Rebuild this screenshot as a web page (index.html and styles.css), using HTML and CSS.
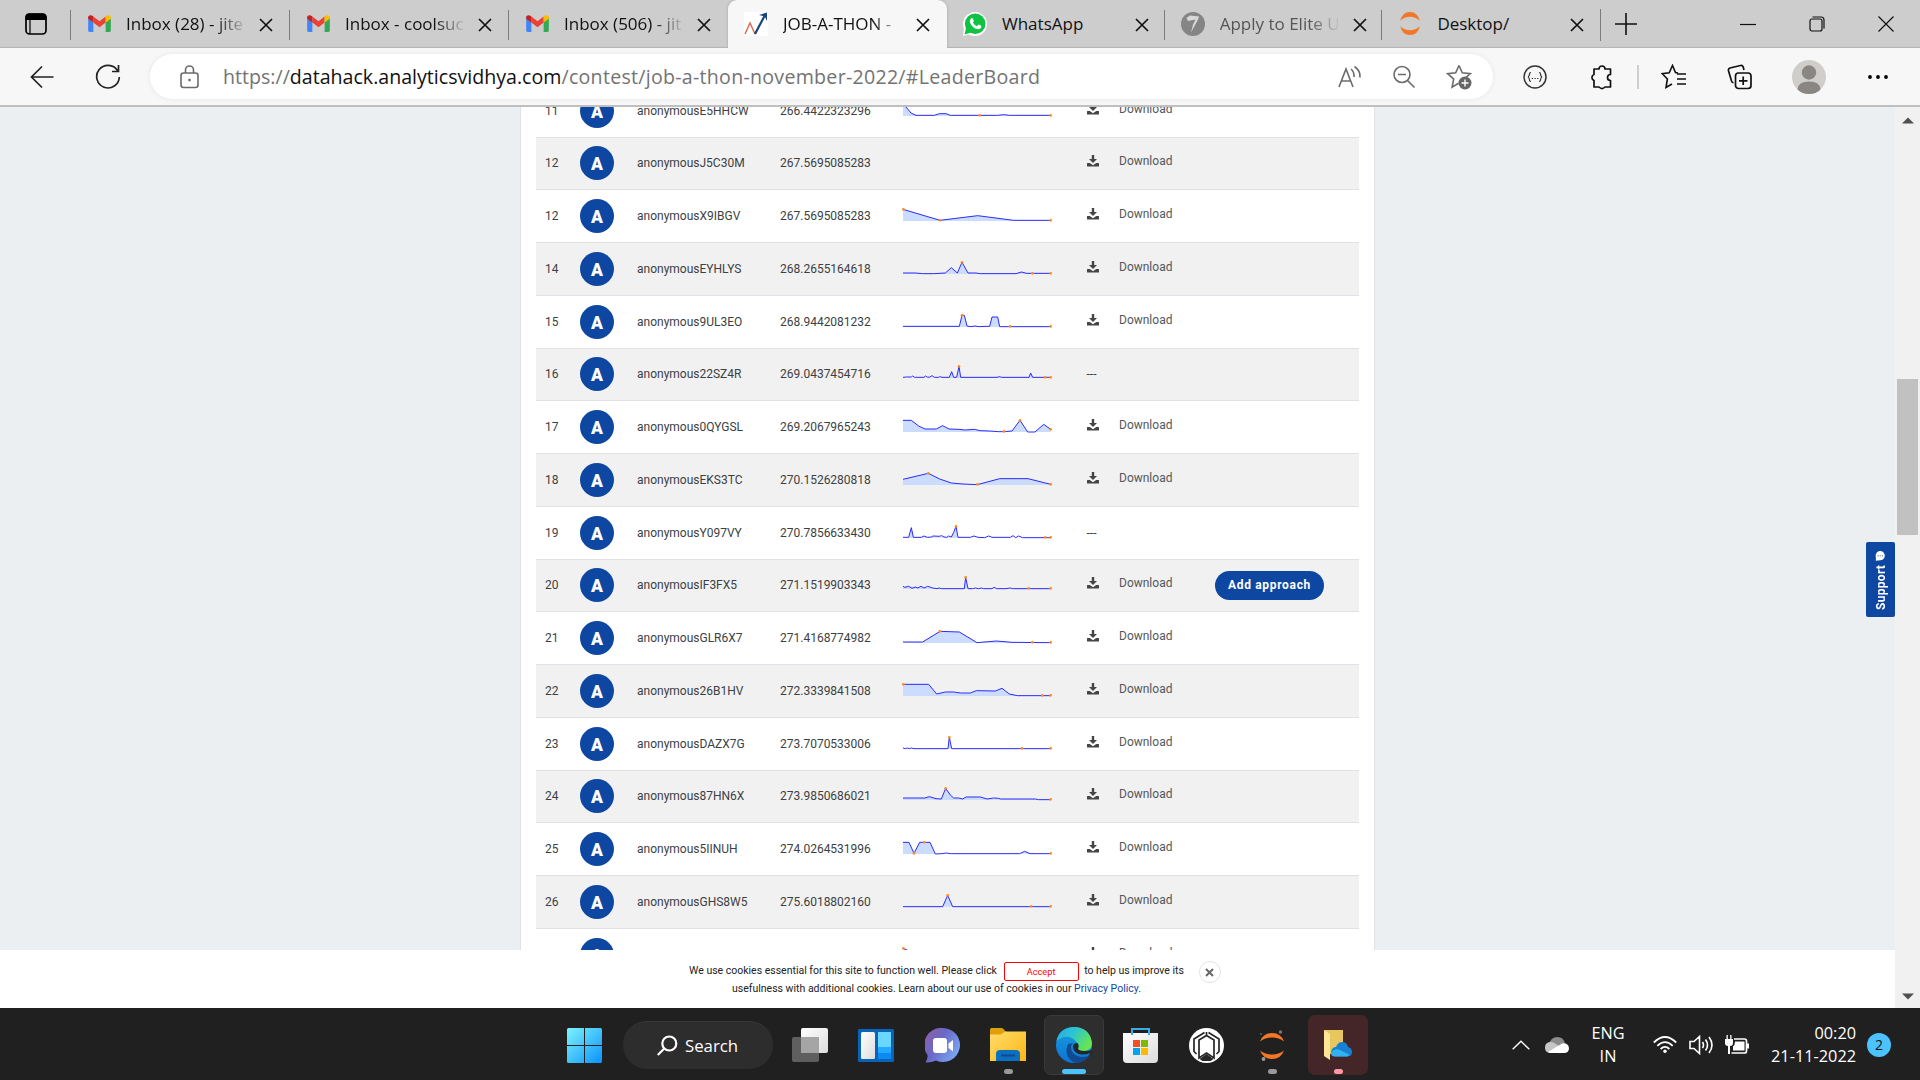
FILE: index.html
```html
<!DOCTYPE html>
<html lang="en">
<head>
<meta charset="utf-8">
<title>JOB-A-THON - November 2022</title>
<link rel="stylesheet" href="styles.css">
</head>
<body>
<svg class="defs" width="0" height="0" aria-hidden="true">
  <defs>
    <linearGradient id="gWin" x1="0" y1="0" x2="1" y2="1"><stop offset="0" stop-color="#7df3fd"/><stop offset="1" stop-color="#0a93fb"/></linearGradient>
    <linearGradient id="gWhite" x1="0" y1="0" x2="1" y2="1"><stop offset="0" stop-color="#fff"/><stop offset="1" stop-color="#dcdcdc"/></linearGradient>
    <linearGradient id="gChat" x1="0" y1="0" x2="1" y2="0.6"><stop offset="0" stop-color="#8d5f9f"/><stop offset=".5" stop-color="#6a68c8"/><stop offset="1" stop-color="#7aa5f3"/></linearGradient>
    <linearGradient id="gFolder" x1="0" y1="0" x2="1" y2="1"><stop offset="0" stop-color="#ffdc6c"/><stop offset="1" stop-color="#fcb813"/></linearGradient>
    <linearGradient id="gEdgeTop" x1="0" y1="0" x2="1" y2=".5"><stop offset="0" stop-color="#2ba6ec"/><stop offset=".5" stop-color="#2cc6cf"/><stop offset="1" stop-color="#67e551"/></linearGradient>
    <linearGradient id="gEdgeLeft" x1="0" y1="0" x2="0" y2="1"><stop offset="0" stop-color="#1b9de2"/><stop offset="1" stop-color="#0a74d4"/></linearGradient>
    <symbol id="gmail" viewBox="0 0 24 18"><path fill="#4285f4" d="M0 2v14.500q0 1.500 1.500 1.500H5.500V8z"/><path fill="#34a853" d="M24 2v14.500q0 1.500-1.500 1.500H18.500V8z"/><path fill="#ea4335" d="M5.500 1.500 12 6.500l6.500-5V8L12 13 5.500 8z"/><path fill="#c5221f" d="M0 2.500C0 0 3 -.8 5.500 1.500V8L0 4z"/><path fill="#fbbc04" d="M24 2.500C24 0 21-.8 18.500 1.500V8L24 4z"/></symbol>
    <symbol id="close" viewBox="0 0 14 14"><path d="M1 1 13 13M13 1 1 13" stroke="#111" stroke-width="1.700" fill="none"/></symbol>
    <symbol id="dl" viewBox="0 0 12 12"><path fill="#454545" d="M4.800 0h2.400v4H10L6 8 2 4h2.800zM.5 8h2.300L6 10.200 9.200 8h2.300q.5 0 .5.500v2.500q0 .500-.5.500H.5Q0 11.500 0 11V8.500Q0 8 .5 8z"/></symbol>
    <symbol id="jup" viewBox="0 0 24 28"><path fill="#f37726" d="M1 11Q3.500 1 12 1t11 10Q18 6.500 12 6.500T1 11zM1 17Q3.500 27 12 27t11-10Q18 21.500 12 21.500T1 17z"/></symbol>
  </defs>
</svg>

<header class="tabstrip">
  <div class="tab-actions"><svg width="22" height="22" viewBox="0 0 22 22"><rect x="1" y="1" width="20" height="20" rx="3.500" fill="none" stroke="#000" stroke-width="1.700"/><path d="M1 6.500V4q0-3 3-3h14q3 0 3 3v2.500zM5 7v14" stroke="#000" stroke-width="1.200"/></svg></div>
  <div class="tab"><span class="fav"><svg width="23" height="17"><use href="#gmail"/></svg></span><span class="title fade">Inbox (28) - jite</span><svg class="x" width="14" height="14"><use href="#close"/></svg></div>
  <div class="tab"><span class="fav"><svg width="23" height="17"><use href="#gmail"/></svg></span><span class="title fade">Inbox - coolsuc</span><svg class="x" width="14" height="14"><use href="#close"/></svg></div>
  <div class="tab"><span class="fav"><svg width="23" height="17"><use href="#gmail"/></svg></span><span class="title fade">Inbox (506) - jit</span><svg class="x" width="14" height="14"><use href="#close"/></svg></div>
  <div class="tab active"><span class="fav"><svg width="24" height="24" viewBox="0 0 24 24"><path fill="#fff" d="M0 0h24v24H0z"/><path d="M1 22 6 11l5 11" fill="none" stroke="#d9694c" stroke-width="1.400"/><path d="M11 22 20.500 4" fill="none" stroke="#16467c" stroke-width="2.200"/><path fill="#16467c" d="M15 3 23 .5V9l-2.200-4.500z"/></svg></span><span class="title fade">JOB-A-THON -</span><svg class="x" width="14" height="14"><use href="#close"/></svg></div>
  <div class="tab"><span class="fav"><svg width="24" height="24" viewBox="0 0 24 24"><circle cx="12" cy="12" r="12" fill="#fff"/><path fill="#fff" d="M0 24 1 16l7 6z"/><circle cx="12.200" cy="11.700" r="10.300" fill="#10c243"/><path fill="#10c243" d="m1.500 22.500 1.700-7 5 5z"/><path fill="#fff" d="M8 6.500q1-1 2 .2l.8 2q.2.700-.9 1.800 1.600 2.900 4 3.700l1.400-1.500q.4-.4 2.500.9 1 .5.400 1.800-1 2-3.400 1.800-5.500-1-8-7Q6.500 8 8 6.500z"/></svg></span><span class="title">WhatsApp</span><svg class="x" width="14" height="14"><use href="#close"/></svg></div>
  <div class="tab dim"><span class="fav"><svg width="24" height="24" viewBox="0 0 24 24"><circle cx="12" cy="12" r="12" fill="#858585"/><path fill="#d8d8d8" d="M5.500 6 9 3.500l9 1-1 3L10 20.500l2-8 2.500-5L7 9z"/></svg></span><span class="title fade">Apply to Elite U</span><svg class="x" width="14" height="14"><use href="#close"/></svg></div>
  <div class="tab"><span class="fav"><svg width="24" height="25"><use href="#jup"/></svg></span><span class="title">Desktop/</span><svg class="x" width="14" height="14"><use href="#close"/></svg></div>
  <div class="newtab"><svg width="22" height="22" viewBox="0 0 22 22"><path d="M11 0v22M0 11h22" stroke="#111" stroke-width="1.600"/></svg></div>
  <div class="wincontrols">
    <svg width="16" height="16" viewBox="0 0 16 16"><path d="M0 8.500h16" stroke="#111" stroke-width="1.200"/></svg>
    <svg width="16" height="16" viewBox="0 0 16 16" fill="none" stroke="#111" stroke-width="1.200"><rect x="1" y="3" width="12" height="12" rx="2"/><path d="M3.500 1H12q3 0 3 3v8.500"/></svg>
    <svg width="16" height="16" viewBox="0 0 16 16"><path d="m.5.500 15 15m0-15-15 15" stroke="#111" stroke-width="1.200"/></svg>
  </div>
</header>

<nav class="toolbar">
  <div class="navbtns">
    <svg width="24" height="24" viewBox="0 0 24 24" fill="none" stroke="#222" stroke-width="1.700"><path d="M23.500 12H1.500M12 1.500 1.500 12 12 22.500"/></svg>
    <svg width="26" height="26" viewBox="0 0 26 26" fill="none" stroke="#222" stroke-width="1.700"><path d="M22.500 6.500A11.300 11.300 0 1 0 24.300 13M23.500 1v6.500H17"/></svg>
  </div>
  <div class="address">
    <svg width="20" height="24" viewBox="0 0 20 24" fill="none" stroke="#6b6b6b" stroke-width="1.600"><rect x="1" y="8" width="17" height="14.500" rx="2.500"/><path d="M5.500 8V5a4 4 0 0 1 8 0v3"/><circle cx="9.500" cy="15" r="1" fill="#6b6b6b" stroke-width=".8"/></svg>
    <div class="url"><span>https://</span><b>datahack.analyticsvidhya.com</b><span class="path">/contest/job-a-thon-november-2022/#LeaderBoard</span></div>
    <div class="addr-icons">
      <svg width="24" height="24" viewBox="0 0 24 24" fill="none" stroke="#6b6b6b" stroke-width="1.600"><path d="M1 22 8 4l7 18M3.500 16h9M13 4q3.500 3 3 8M16.500 1.500q6 4 5.500 11"/></svg>
      <svg width="24" height="24" viewBox="0 0 24 24" fill="none" stroke="#6b6b6b" stroke-width="1.600"><circle cx="10" cy="9.500" r="8"/><path d="m15.500 15.500 7 7M6 9.500h8"/></svg>
      <svg width="26" height="26" viewBox="0 0 26 26"><path d="m13 1.500 3.300 7.300 8 .9-5 4.300M13 1.500 9.700 8.800l-8 .9 6 5.400-1.600 8 6.500-3.800" fill="none" stroke="#6b6b6b" stroke-width="1.600"/><circle cx="19" cy="19" r="6.500" fill="#666"/><path d="M19 15.500v7M15.500 19h7" stroke="#fff" stroke-width="1.400"/></svg>
    </div>
  </div>
  <div class="ext">
    <svg width="24" height="24" viewBox="0 0 24 24" fill="none" stroke="#333" stroke-width="1.500"><circle cx="12" cy="12" r="11"/><path d="M8 7.500Q6.500 7.500 6.500 9T5.300 12q1.200 1.500 1.200 3T8 16.500M16 7.500q1.500 0 1.500 1.500t1.200 3q-1.200 1.500-1.200 3T16 16.500M8.700 13.500h1.300m1.400 0h1.300m1.400 0h1.300" stroke-width="1.200"/></svg>
    <svg width="24" height="26" viewBox="0 0 24 26" fill="none" stroke="#111" stroke-width="1.700" stroke-linejoin="round"><path d="M5 5H10A3 3 0 0 1 16 5H21.500v5.500q-3 0-3 3t3 3V23H16q-3 3-6 0H5v-6.500A3.200 3.200 0 0 1 5 10.500z"/></svg>
    <i class="vsep"></i>
    <svg width="26" height="26" viewBox="0 0 26 26" fill="none" stroke="#111" stroke-width="1.600"><path d="M17 9 14.500 8.500 11.500 1.500 8.200 8.800l-7 .9 5.200 5.300-1.400 8.500 6-3.500M16 10h9M16 15h9M16 20h9"/></svg>
    <svg width="26" height="26" viewBox="0 0 26 26" fill="none" stroke="#111" stroke-width="1.700"><rect x="8.500" y="9" width="15.500" height="15.500" rx="3"/><path d="M16.200 12.500v8.500M12 16.800h8.500M17 6l-.8-3q-.7-2-2.700-1.500L3 4Q1 4.700 1.500 6.700L4.500 17q.7 1.700 2 1.700"/></svg>
    <svg width="34" height="34" viewBox="0 0 34 34"><circle cx="17" cy="17" r="17" fill="#d0cecb"/><circle cx="17" cy="12.500" r="7.200" fill="#8a8683"/><path fill="#8a8683" d="M5.500 29.500Q6 21.500 17 21.500t11.500 8Q24 34 17 34T5.500 29.500z"/></svg>
    <svg width="22" height="6" viewBox="0 0 22 6"><circle cx="3" cy="3" r="1.900"/><circle cx="11" cy="3" r="1.900"/><circle cx="19" cy="3" r="1.900"/></svg>
  </div>
</nav>

<div class="viewport">
  <div class="page">
    <main class="content">
      <section class="board">
        <div class="row"><span>11</span><i class="av">A</i><span>anonymousE5HHCW</span><span>266.4422323296</span><svg class="spark" viewBox="0 0 450 45"><path d="M3 4 12 12 27 30 42 37 97 37 112 32 132 32 145 37 287 37 305 35 322 37 446 37V39H3z"/><polyline points="3,4 12,12 27,30 42,37 97,37 112,32 132,32 145,37 287,37 305,35 322,37 446,37"/><circle cx="233" cy="37" r="4"/><circle cx="446" cy="37" r="4"/></svg><svg class="dl"><use href="#dl"/></svg><a>Download</a></div>
        <div class="row"><span>12</span><i class="av">A</i><span>anonymousJ5C30M</span><span>267.5695085283</span><svg class="spark" viewBox="0 0 450 45"></svg><svg class="dl"><use href="#dl"/></svg><a>Download</a></div>
        <div class="row"><span>12</span><i class="av">A</i><span>anonymousX9IBGV</span><span>267.5695085283</span><svg class="spark" viewBox="0 0 450 45"><path d="M3 4 114 37 227 23 335 37 446 37V39H3z"/><polyline points="3,4 114,37 227,23 335,37 446,37"/><circle cx="4" cy="4" r="4"/><circle cx="114" cy="37" r="4"/><circle cx="446" cy="37" r="4"/></svg><svg class="dl"><use href="#dl"/></svg><a>Download</a></div>
        <div class="row"><span>14</span><i class="av">A</i><span>anonymousEYHLYS</span><span>268.2655164618</span><svg class="spark" viewBox="0 0 450 45"><path d="M3 36H130L148 20 166 36 180 4 198 36 342 37 358 33 374 37 446 37V39H3z"/><polyline points="3,36 40,36 62,38 95,38 130,36 148,20 166,36 180,4 198,36 222,36 235,38 342,38 358,33 374,37 446,37"/><circle cx="180" cy="4" r="4"/><circle cx="391" cy="37" r="4"/><circle cx="446" cy="37" r="4"/></svg><svg class="dl"><use href="#dl"/></svg><a>Download</a></div>
        <div class="row"><span>15</span><i class="av">A</i><span>anonymous9UL3EO</span><span>268.9442081232</span><svg class="spark" viewBox="0 0 450 45"><path d="M3 37H172L180 4H187L195 37H263L270 9H287L293 38H446V39H3z"/><polyline points="3,37 172,37 180,4 187,4 195,36 207,38 219,36 232,38 249,37 263,37 270,9 287,9 293,38 446,38"/><circle cx="180" cy="4" r="4"/><circle cx="324" cy="37" r="4"/><circle cx="446" cy="37" r="4"/></svg><svg class="dl"><use href="#dl"/></svg><a>Download</a></div>
        <div class="row"><span>16</span><i class="av">A</i><span>anonymous22SZ4R</span><span>269.0437454716</span><svg class="spark up" viewBox="0 0 450 45"><path d="M142 37 149 20 155 37H164L171 4 176 37H381L386 24 392 37V39H142z"/><polyline points="3,37 14,36 28,36 32,33 38,37 66,37 71,33 77,37 84,36 90,32 97,37 109,37 115,35 120,37 142,37 149,20 155,37 164,37 171,4 176,37 285,37 292,35 299,37 381,37 386,24 392,37 446,37"/><circle cx="171" cy="4" r="4"/><circle cx="430" cy="37" r="4"/><circle cx="446" cy="37" r="4"/></svg><span>---</span></div>
        <div class="row"><span>17</span><i class="av">A</i><span>anonymous0QYGSL</span><span>269.2067965243</span><svg class="spark" viewBox="0 0 450 45"><path d="M3 4 28 4 50 21 69 30 103 30 122 20 141 30 170 31 190 33 217 31 235 35 262 36 290 38 306 38 330 36 354 4 377 39 399 39 425 16 446 31V39H3z"/><polyline points="3,4 28,4 50,21 69,30 103,30 122,20 141,30 170,31 190,33 217,31 235,35 262,36 290,38 306,38 330,36 354,4 377,39 399,39 425,16 446,31"/><circle cx="306" cy="37" r="4"/><circle cx="354" cy="4" r="4"/><circle cx="446" cy="31" r="4"/></svg><svg class="dl"><use href="#dl"/></svg><a>Download</a></div>
        <div class="row"><span>18</span><i class="av">A</i><span>anonymousEKS3TC</span><span>270.1526280818</span><svg class="spark" viewBox="0 0 450 45"><path d="M3 22 79 4 113 21 148 33 183 36 226 38 293 20 378 20 446 37V39H3z"/><polyline points="3,22 79,4 113,21 148,33 183,36 226,38 293,20 378,20 446,37"/><circle cx="79" cy="4" r="4"/><circle cx="226" cy="37" r="4"/><circle cx="446" cy="37" r="4"/></svg><svg class="dl"><use href="#dl"/></svg><a>Download</a></div>
        <div class="row"><span>19</span><i class="av">A</i><span>anonymousY097VY</span><span>270.7856633430</span><svg class="spark" viewBox="0 0 450 45"><path d="M20 37 28 8 34 37H148L155 22 162 4 168 37V39H20z"/><polyline points="3,37 20,37 28,8 34,37 58,37 66,33 76,37 88,36 93,33 112,34 119,32 126,36 134,37 140,33 148,36 155,22 162,4 168,37 205,37 216,33 228,37 248,38 260,33 270,37 325,37 333,32 341,38 350,33 362,38 446,38"/><circle cx="162" cy="4" r="4"/><circle cx="430" cy="37" r="4"/><circle cx="446" cy="37" r="4"/></svg><span>---</span></div>
        <div class="row"><span>20</span><i class="av">A</i><span>anonymousIF3FX5</span><span>271.1519903343</span><svg class="spark up" viewBox="0 0 450 45"><path d="M3 31 92 36 187 38 191 4 198 38V39H3z"/><polyline points="3,31 8,34 20,31 30,37 40,33 47,36 57,31 66,36 77,31 92,36 105,38 112,36 118,38 187,38 191,4 198,38 212,38 220,36 230,38 238,36 244,38 270,38 276,34 284,38 312,38 324,36 332,38 446,38"/><circle cx="191" cy="4" r="4"/><circle cx="380" cy="37" r="4"/><circle cx="446" cy="37" r="4"/></svg><svg class="dl"><use href="#dl"/></svg><a>Download</a><button class="approach">Add approach</button></div>
        <div class="row"><span>21</span><i class="av">A</i><span>anonymousGLR6X7</span><span>271.4168774982</span><svg class="spark" viewBox="0 0 450 45"><path d="M3 36H62L114 4 172 6 225 38 283 33 330 37 446 38V39H3z"/><polyline points="3,36 62,36 114,4 172,6 225,38 283,33 330,37 446,38"/><circle cx="114" cy="4" r="4"/><circle cx="391" cy="37" r="4"/><circle cx="446" cy="37" r="4"/></svg><svg class="dl"><use href="#dl"/></svg><a>Download</a></div>
        <div class="row"><span>22</span><i class="av">A</i><span>anonymous26B1HV</span><span>272.3339841508</span><svg class="spark" viewBox="0 0 450 45"><path d="M3 4H80L104 33 130 27 155 27 175 30 205 30 223 23 280 24 300 16 322 33 346 38 446 38V39H3z"/><polyline points="3,4 80,4 104,33 130,27 155,27 175,30 205,30 223,23 280,24 300,16 322,33 346,38 446,38"/><circle cx="4" cy="4" r="4"/><circle cx="421" cy="37" r="4"/><circle cx="446" cy="37" r="4"/></svg><svg class="dl"><use href="#dl"/></svg><a>Download</a></div>
        <div class="row"><span>23</span><i class="av">A</i><span>anonymousDAZX7G</span><span>273.7070533006</span><svg class="spark" viewBox="0 0 450 45"><path d="M138 38 142 4 149 38z"/><polyline points="3,36 10,38 16,36 22,38 28,36 36,38 138,38 142,4 149,38 446,38"/><circle cx="142" cy="4" r="4"/><circle cx="360" cy="37" r="4"/><circle cx="446" cy="37" r="4"/></svg><svg class="dl"><use href="#dl"/></svg><a>Download</a></div>
        <div class="row"><span>24</span><i class="av">A</i><span>anonymous87HN6X</span><span>273.9850686021</span><svg class="spark up" viewBox="0 0 450 45"><path d="M3 33H68L82 29 102 35 118 36 131 4 145 24 155 33 182 36 192 30H235L255 36H400V39H3z"/><polyline points="3,33 68,33 82,29 102,35 118,36 131,4 145,24 155,33 170,33 182,36 192,30 235,30 255,36 275,33 290,34 296,36 400,36 410,38 446,38"/><circle cx="131" cy="4" r="4"/><circle cx="446" cy="37" r="4"/></svg><svg class="dl"><use href="#dl"/></svg><a>Download</a></div>
        <div class="row"><span>25</span><i class="av">A</i><span>anonymous5IINUH</span><span>274.0264531996</span><svg class="spark" viewBox="0 0 450 45"><path d="M3 4H21L36 37 53 4H84L100 39H3zM353 38 368 31 384 38z"/><polyline points="3,4 21,4 36,37 53,4 84,4 100,39 120,38 132,36 145,38 353,38 368,31 384,38 446,38"/><circle cx="36" cy="37" r="4"/><circle cx="67" cy="4" r="4"/><circle cx="446" cy="37" r="4"/></svg><svg class="dl"><use href="#dl"/></svg><a>Download</a></div>
        <div class="row"><span>26</span><i class="av">A</i><span>anonymousGHS8W5</span><span>275.6018802160</span><svg class="spark" viewBox="0 0 450 45"><path d="M122 38 137 4 152 38z"/><polyline points="3,38 122,38 137,4 152,38 446,38"/><circle cx="137" cy="4" r="4"/><circle cx="387" cy="37" r="4"/><circle cx="446" cy="37" r="4"/></svg><svg class="dl"><use href="#dl"/></svg><a>Download</a></div>
        <div class="row"><span></span><i class="av">A</i><span></span><span></span><svg class="spark" viewBox="0 0 450 45"><path d="M3 4 80 38 H3z"/><polyline points="3,4 80,38 446,38"/><circle cx="4" cy="4" r="4"/></svg><svg class="dl"><use href="#dl"/></svg><a>Download</a></div>
      </section>
    </main>
    <footer class="cookies">
      <div class="cookie-text">
        <p>We use cookies essential for this site to function well. Please click <button class="accept">Accept</button> to help us improve its</p>
        <p>usefulness with additional cookies. Learn about our use of cookies in our <a>Privacy Policy.</a></p>
      </div>
      <button class="dismiss"><svg width="9" height="9" viewBox="0 0 9 9"><path d="m1 1 7 7m0-7L1 8" stroke="#666" stroke-width="2"/></svg></button>
    </footer>
    <div class="support"><span>Support</span><svg width="10" height="10" viewBox="0 0 10 10"><circle cx="5.200" cy="4.700" r="4.600" fill="#fff"/><path d="M.8 9.800 1 5l4 4.200z" fill="#fff"/><path d="M2.500 4.800h1M4.700 4.800h1M6.900 4.800h1" stroke="#0d47a1" stroke-width=".9"/></svg></div>
  </div>
  <div class="scrollbar">
    <svg width="12" height="7" viewBox="0 0 12 7"><path fill="#505050" d="m0 6.500 6-6 6 6z"/></svg>
    <div class="thumb"></div>
    <svg class="down" width="12" height="7" viewBox="0 0 12 7"><path fill="#505050" d="m0 .5 6 6 6-6z"/></svg>
  </div>
</div>

<div class="taskbar">
  <div class="apps">
    <div class="app"><svg width="35" height="35" viewBox="0 0 35 35"><path fill="url(#gWin)" d="M1.500 0H17v17H0V1.500Q0 0 1.500 0zM18 0h15.500Q35 0 35 1.500V17H18zM0 18h17v17H1.500Q0 35 0 33.500zM18 18h17v15.500q0 1.500-1.500 1.500H18z"/></svg></div>
    <div class="search"><svg width="21" height="21" viewBox="0 0 21 21" fill="none" stroke="#fff" stroke-width="2.200"><circle cx="12.300" cy="8.500" r="7"/><path d="M7.300 13.500.8 20"/></svg><span>Search</span></div>
    <div class="app"><svg width="36" height="34" viewBox="0 0 36 34"><rect x="9" width="27" height="25" rx="2" fill="url(#gWhite)"/><rect y="9" width="27" height="25" rx="2" fill="#6b6b6b" fill-opacity=".85"/><path fill="#a5a5a5" d="M9 9h18v16H9z"/></svg></div>
    <div class="app"><svg width="36" height="33" viewBox="0 0 36 33"><rect width="36" height="33" rx="1.500" fill="#0b62b9"/><rect x="3" y="3" width="14" height="27" rx="1.500" fill="url(#gWhite)"/><path fill="#69d7ff" d="M20 3h13v15H20z"/><path fill="#23a9ff" d="M20 18h13v6H20z"/><path fill="#0b8af2" d="M20 24h13v6H20z"/></svg></div>
    <div class="app"><svg width="35" height="35" viewBox="0 0 35 35"><path fill="url(#gChat)" d="M18 0a17 17 0 1 1-7 32.500Q6 35 .5 34.500 3 31 2.500 27A17 17 0 0 1 18 0z"/><rect x="8" y="10" width="14" height="15" rx="3" fill="#fff"/><path fill="#fff" d="M23.500 15.500 28 12v11.500l-4.500-3.500z"/></svg></div>
    <div class="app run"><svg width="36" height="34" viewBox="0 0 36 34"><path fill="#e09f0c" d="M0 8V1.500Q0 0 1.500 0H11q1.500 0 2.500 1l2.500 3-4 5z"/><path fill="url(#gFolder)" d="M0 6.500h11L15 3.500H36V33H0z"/><path fill="#0c6fc0" d="M6 33v-7q0-4 4-4h16q4 0 4 4v7z"/><path stroke="#0a4c8c" stroke-width="2" d="M11 27.500h14"/></svg></div>
    <div class="app focus"><svg width="36" height="36" viewBox="0 0 36 36"><circle cx="18" cy="18" r="18" fill="url(#gEdgeLeft)"/><path fill="#114a91" d="M12 17Q7 29 18 35.500 28 37 34 28q-4 2.500-9 2-10-2-10-10 .5-3 2-4z"/><path fill="url(#gEdgeTop)" d="M.5 14Q3 1 17 0 34 0 36 16q0 8-9 8-6 0-5.500-3 1.500-3-1-6Q12 5 .5 14z"/><path fill="#262626" d="M21.500 16q-5 0-4.500 4.500 1 6 8.500 7 5 .3 8.500-1.500.8-.2.300.7l2.700 3.300V22q-3 2.500-9 2-6.500-.5-5.800-3 1.300-2-.7-5z"/></svg></div>
    <div class="app"><svg width="35" height="35" viewBox="0 0 35 35"><path d="M9 8V1h17v7" fill="none" stroke="#38aee8" stroke-width="2"/><path fill="url(#gWhite)" d="M0 5h35v26q0 4-4 4H4q-4 0-4-4z"/><path d="M9 3v4M26 3v4" stroke="#38aee8" stroke-width="2"/><path fill="#f25022" d="M10 12h7v7h-7z"/><path fill="#7fba00" d="M18 12h7v7h-7z"/><path fill="#00a4ef" d="M10 20h7v7h-7z"/><path fill="#ffb900" d="M18 20h7v7h-7z"/></svg></div>
    <div class="app"><svg width="35" height="35" viewBox="0 0 35 35"><circle cx="17.500" cy="17.500" r="17.500" fill="#fff"/><path fill="none" stroke="#262626" stroke-width="1.700" d="M15.500 4.500 5 11v12.500l2.500 2.500M19.500 4.500 30 11v12.500L27.500 26M17.500 4v3.500L10 12v18l7.500-5 7.500 5V12l-7.500-4.500"/><path fill="#262626" d="m10.500 31 7-5 7 5-3 2h-8z"/></svg></div>
    <div class="app run"><svg width="24" height="32" viewBox="0 0 24 32"><path fill="#f37726" d="M0 12.500Q3 4 12 4t12 8.500Q19 8.500 12 8.500T0 12.500zM0 21.500Q3 30 12 30t12-8.500Q19 25.500 12 25.500T0 21.500z"/><circle cx="20.500" cy="3" r="1.700" fill="#767677"/><circle cx="3.500" cy="30" r="1.900" fill="#9a9a9a"/><circle cx="1" cy="5" r="1" fill="#616262"/></svg></div>
    <div class="app alert"><svg width="30" height="32" viewBox="0 0 30 32"><path fill="#e9c75f" d="M1 1h19v24H1z"/><path fill="#ffe598" d="M1 1l6 4v26l-6-4z"/><path fill="#1580d5" d="M8 23q1-5 5-5 2-5 6-5 5 0 6 5 4 1 4 5 0 4-4 4.500H12Q8 27 8 23z"/><path fill="#32b0ef" d="M8 24q2-4 7-4l12 6-3 1.500H12q-4 0-4-3.500z"/></svg></div>
  </div>
  <div class="tray">
    <svg width="18" height="10" viewBox="0 0 18 10"><path d="m.7 9.300 8.300-8 8.300 8" fill="none" stroke="#fff" stroke-width="1.400"/></svg>
    <svg class="cloud" width="24" height="16" viewBox="0 0 24 16"><path fill="#8c8c8c" d="M4 7Q6 0 12.500 0 18 0 20 6l-8 6z"/><path fill="#c6c6c6" d="M0 10.500Q0 5 6 5q3 0 9 5l-4 6H5Q0 15.500 0 10.500z"/><path fill="#fff" d="M3 15 17 6.500q6-1 7 4.500 0 5-5 5H5z"/></svg>
    <div class="lang">ENG<br>IN</div>
    <svg class="wifi" width="24" height="18" viewBox="0 0 24 18" fill="none" stroke="#fff" stroke-width="1.800"><path d="M.8 6.500Q12-4.500 23.200 6.500M4.300 9.800q7.700-7.300 15.400 0M7.600 13q4.400-4.200 8.800 0"/><circle cx="12" cy="15.300" r="1.700" fill="#fff" stroke="none"/></svg>
    <svg class="vol" width="25" height="20" viewBox="0 0 25 20" fill="none" stroke="#fff" stroke-width="1.600"><path d="M1 6.500h4l5.500-5v17l-5.500-5H1zM13.500 7q2 3 0 6M16.500 4.500q4 5.500 0 11M20 2q6 8 0 16"/></svg>
    <svg class="bat" width="25" height="20" viewBox="0 0 25 20"><path d="M9 4h10.500q2 0 2 2v10q0 2-2 2H6.500" fill="none" stroke="#fff" stroke-width="1.700"/><path fill="#fff" d="M10 6.500h9.500v9H8v-4q2-1.500 2-5zM22 8.500h2v5h-2zM0 4h8v4q0 3-3 3v8H3v-8Q0 11 0 8zM1.500 0h1.300v4H1.500zM5.200 0h1.300v4H5.200z"/></svg>
    <div class="clock">00:20<br>21-11-2022</div>
    <div class="count">2</div>
  </div>
</div>
</body>
</html>
```
FILE: styles.css
```css
* { box-sizing: border-box; }

body {
  margin: 0;
  width: 1920px;
  height: 1080px;
  overflow: hidden;
  display: flex;
  flex-direction: column;
  font-family: Roboto, "Liberation Sans", sans-serif;
  color: #3c3f43;
}

svg { display: block; flex: none; }
button { font: inherit; }
.defs { position: absolute; }

/* tab strip */
.tabstrip {
  flex: none;
  height: 48px;
  display: flex;
  background: #cdcdcd;
  box-shadow: inset 0 -2px 1px -1px #b4b4b4;
  font: 17px/24px "Open Sans", "Noto Sans", sans-serif;
  color: #111;
}
.tab-actions { width: 71px; padding: 13px 0 0 25px; }
.tab {
  position: relative;
  width: 219px;
  display: flex;
  align-items: center;
  padding: 0 0 1px 16px;
}
.active ~ .tab { width: 217.700px; }
.tab::before {
  content: "";
  position: absolute;
  left: -1px;
  top: 10px;
  width: 1px;
  height: 30px;
  background: #7c7c7c;
}
.tab.active::before, .tab.active + .tab::before { display: none; }
.tab.active {
  background: #f7f7f7;
  border-radius: 9px 9px 0 0;
  box-shadow: 0 0 3px #a5a5a5;
  clip-path: inset(0 -4px 0 -4px);
}
.fav { width: 24px; display: flex; justify-content: center; }
.title {
  width: 124px;
  margin-left: 15px;
  white-space: nowrap;
}
.fade { mask-image: linear-gradient(90deg, #000 72%, transparent 98%); }
.x { margin: 2px 0 0 9px; }
.dim .title { color: #555; }
.newtab {
  width: 100px;
  padding: 13px 0 0 14px;
  border-left: 1px solid;
  border-image: linear-gradient(transparent 10px, #7c7c7c 10px 40px, transparent 40px) 1;
}
.wincontrols { margin-left: 39.500px; padding-top: 16px; display: flex; gap: 53px; }

/* navigation bar */
.toolbar {
  flex: none;
  height: 59px;
  display: flex;
  align-items: center;
  background: #f7f7f7;
  border-bottom: 2px solid #bfbfbf;
}
.navbtns { width: 150px; padding-left: 30px; display: flex; align-items: center; gap: 41px; }
.address {
  width: 1343px;
  height: 45px;
  display: flex;
  align-items: center;
  padding-left: 30px;
  background: #fff;
  border-radius: 23px;
  box-shadow: 0 0 5px #e6e6e6;
}
.url {
  width: 1115px;
  margin-left: 23px;
  font: 19.600px/28px "Open Sans", "Noto Sans", sans-serif;
  color: #737373;
  white-space: nowrap;
}
.url b { font-weight: 400; color: #111; }
.path { letter-spacing: .27px; }
.addr-icons { display: flex; align-items: center; gap: 30px; }
.ext { display: flex; align-items: center; margin-left: 30px; }
.ext svg:nth-of-type(2) { margin-left: 42px; }
.vsep { width: 2px; height: 24px; margin: 0 22px 0 24px; background: #cfcfcf; }
.ext svg:nth-of-type(4) { margin-left: 40px; }
.ext svg:nth-of-type(5) { margin-left: 39px; }
.ext svg:nth-of-type(6) { margin-left: 41px; }

/* web page */
.viewport { flex: none; height: 901px; display: flex; }
.page {
  position: relative;
  width: 1895px;
  display: flex;
  flex-direction: column;
  background: #ebeff2;
}
.content { height: 843px; overflow: hidden; padding-left: 520px; }
.board {
  width: 855px;
  margin-top: -23.150px;
  padding: 0 15px;
  background: #fff;
  border: solid #dee2e6;
  border-width: 0 1px;
}
.row {
  height: 52.750px;
  display: grid;
  grid-template-columns: 35px 57px 143px 121.500px 185px 32.500px 96px 110px;
  align-items: center;
  padding-left: 9px;
  border-top: 1px solid #dee2e6;
  font-size: 12px;
  line-height: 18px;
  white-space: nowrap;
}
.row:nth-child(even) { background: #f1f1f1; }
.av {
  width: 34px;
  height: 34px;
  border-radius: 50%;
  background: #0d47a1;
  color: #fff;
  font: 900 17.500px/36px Roboto, sans-serif;
  text-align: center;
}
.spark { width: 150px; height: 15px; margin-top: -1px; overflow: visible; }
.spark.up { margin-top: -3px; }
.spark path { fill: #ccdcff; }
.spark polyline { fill: none; stroke: #2a2aff; stroke-width: 3; stroke-linejoin: round; }
.spark circle { fill: #ff8c1a; }
.dl { width: 12px; height: 12px; margin-top: -4px; }
.row a { margin-top: -4px; color: #54575b; }
.approach {
  width: 109px;
  height: 29px;
  padding: 0;
  border: 0;
  border-radius: 15px;
  background: #0d47a1;
  color: #fff;
  font-weight: 700;
  letter-spacing: .68px;
}

.cookies {
  height: 58px;
  display: flex;
  justify-content: center;
  padding: 11px 0 0 12px;
  background: #fff;
  color: #222;
  font-size: 10.500px;
  text-align: center;
}
.cookie-text { width: 500px; }
.cookies p { margin: 0; line-height: 15px; white-space: nowrap; }
.cookies p:first-child { line-height: 20px; }
.cookies a { color: #0d47a1; }
.accept {
  width: 75px;
  height: 19px;
  margin: 0 3px 0 4px;
  padding: 0;
  background: #fff;
  border: 1px solid #f00;
  border-radius: 2px;
  color: #f00;
  font-size: 9.200px;
  line-height: 17px;
  vertical-align: middle;
}
.dismiss {
  width: 22px;
  height: 22px;
  margin: 0 0 0 12px;
  padding: 0;
  display: grid;
  place-items: center;
  background: #fff;
  border: 1px solid #e3e3e3;
  border-radius: 50%;
}
.support {
  position: absolute;
  right: 0;
  top: 435px;
  width: 29px;
  height: 75px;
  display: flex;
  align-items: center;
  gap: 4px;
  padding-top: 7px;
  writing-mode: vertical-rl;
  transform: rotate(180deg);
  background: #0d47a1;
  border-radius: 2px;
  color: #fff;
  font-size: 12px;
  font-weight: 700;
  letter-spacing: .3px;
}
.support svg { transform: rotate(180deg); }
.scrollbar {
  width: 25px;
  display: flex;
  flex-direction: column;
  align-items: center;
  padding-top: 10px;
  background: #f1f1f1;
}
.thumb { width: 21px; height: 156px; margin-top: 255px; background: #c1c1c1; }
.down { margin-top: 458px; }

/* taskbar */
.taskbar { flex: none; height: 72px; display: flex; background: #202020; color: #fff; }
.apps { flex: none; width: 1371px; display: flex; align-items: center; padding-left: 551px; }
.app {
  flex: none;
  position: relative;
  width: 60px;
  height: 60px;
  margin: 2px 3px 0;
  display: grid;
  place-items: center;
  border-radius: 7px;
}
.search {
  flex: none;
  width: 150px;
  height: 48px;
  margin: 2px 4px 0 6px;
  display: flex;
  align-items: center;
  padding-left: 34px;
  gap: 7px;
  border-radius: 24px;
  background: #2d2d2d;
  border-top: 1px solid #383838;
  font: 16.800px/22px "Open Sans", "Noto Sans", sans-serif;
}
.focus { background: #2e2e2e; border: 1px solid #393939; }
.alert { background: #452628; }
.run::after, .focus::after, .alert::after {
  content: "";
  position: absolute;
  left: 50%;
  bottom: 1px;
  width: 9px;
  height: 5px;
  margin-left: -4.500px;
  border-radius: 3px;
  background: #999;
}
.focus::after { width: 24px; margin-left: -12px; bottom: 0; background: #4cc2ff; }
.alert::after { background: #ff99a4; }
.tray {
  display: flex;
  align-items: center;
  padding: 1px 0 0 141px;
  font: 16.300px/23px "Open Sans", "Noto Sans", sans-serif;
}
.cloud { margin-left: 15px; }
.lang { width: 50px; margin-left: 14px; text-align: center; }
.wifi { margin-left: 20px; }
.vol { margin-left: 12px; }
.bat { margin-left: 11px; }
.clock { width: 95px; margin-left: 11px; text-align: right; }
.count {
  width: 24px;
  height: 24px;
  margin-left: 11px;
  border-radius: 50%;
  background: #4cc2ff;
  color: #111;
  font-size: 14px;
  line-height: 24px;
  text-align: center;
}
```
